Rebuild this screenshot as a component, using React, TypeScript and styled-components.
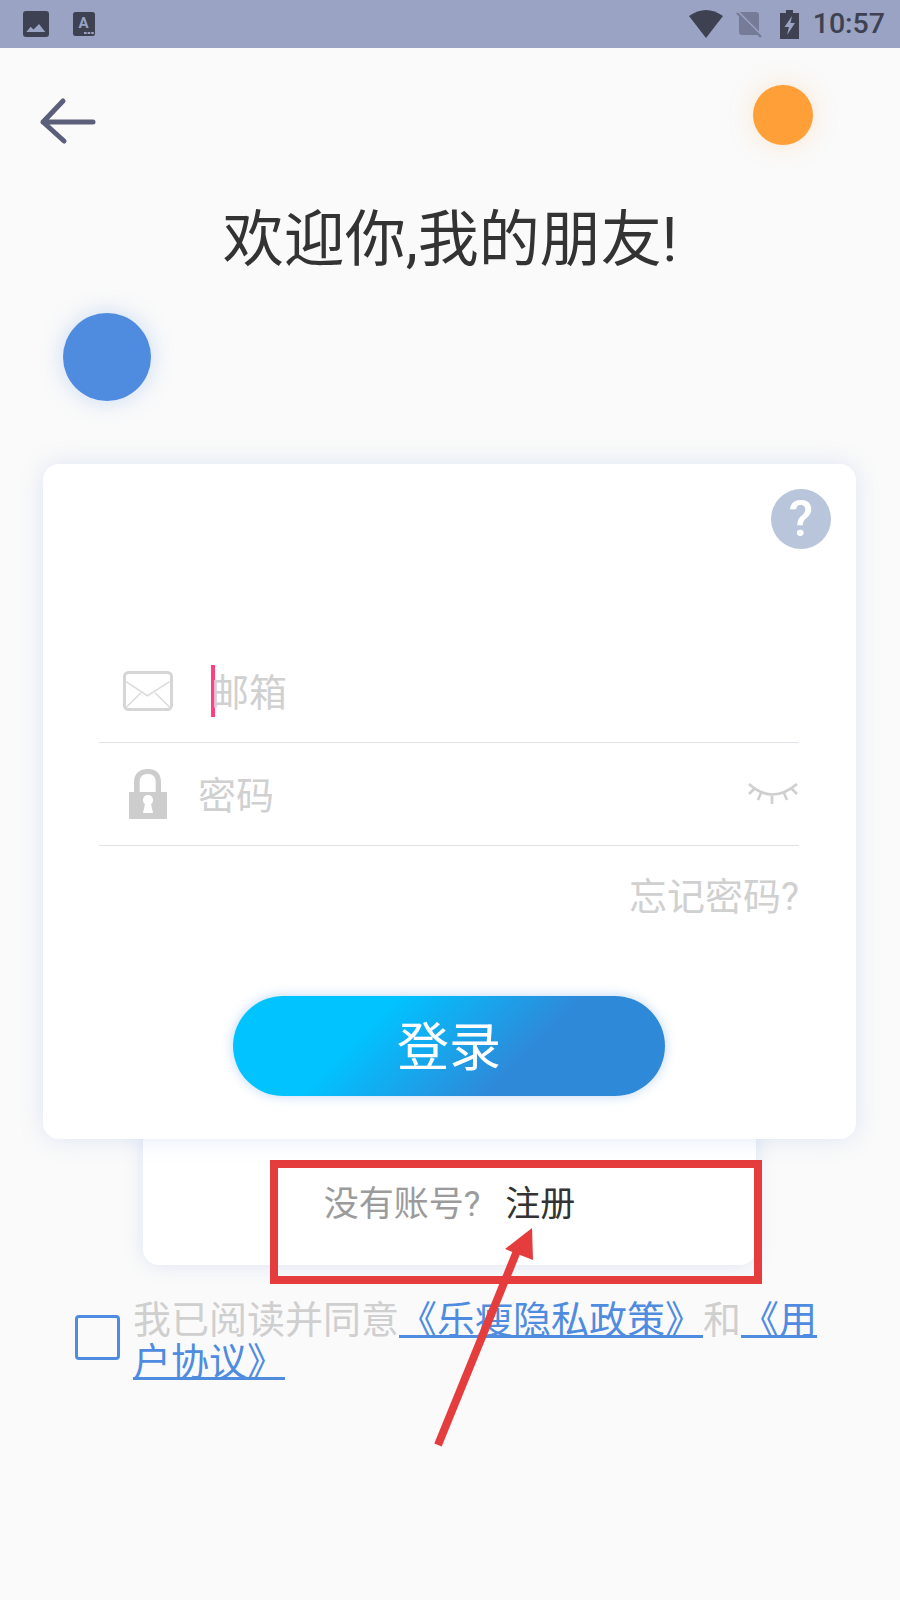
import React from 'react';
import styled, {createGlobalStyle} from "styled-components";

const GlobalStyle = createGlobalStyle`
    html, body {
        margin: 0;
        padding: 0;
        background: #fafafa;
    }
    body {
        font-family: Roboto, "Noto Sans CJK SC", sans-serif;
    }
`

export default function App() {
    return (
        <Page>
            <GlobalStyle/>
            <StatusBar>
                <StatusGroup>
                    <StatusIcon width="26" height="26" viewBox="0 0 26 26" $gap={23}>
                        <rect width="26" height="26" rx="3" fill="#3e4152"/>
                        <path d="M3.3 21 L7.7 15.7 L10.5 18.4 L16 13 L22.3 21 Z" fill="#9aa3c3"/>
                    </StatusIcon>
                    <StatusIcon width="22" height="24" viewBox="0 0 22 24" $gap={24}>
                        <rect width="22" height="24" rx="2.5" fill="#3e4152"/>
                        <text x="10.5" y="16" textAnchor="middle" fontFamily="Roboto" fontWeight="700" fontSize="15" fill="#9aa3c3">A</text>
                        <path d="M11 20h2.6v2H11zM14.6 20h2.6v2h-2.6zM18.2 20h2.6v2h-2.6z" fill="#9aa3c3"/>
                    </StatusIcon>
                </StatusGroup>
                <StatusGroup>
                    <StatusIcon width="34" height="28" viewBox="0 0 34 28">
                        <path d="M0 6 Q17 -6 34 6 L17 28 Z" fill="#3e4152"/>
                    </StatusIcon>
                    <StatusIcon width="26" height="27" viewBox="0 0 26 27" $gap={13}>
                        <path d="M5 1 H20 Q23 1 23 4 V24 H6 Q3 24 3 21 V3 Q3 1 5 1 Z" fill="#767b98"/>
                        <path d="M1 0 L25 24" stroke="#9aa3c3" strokeWidth="2.4"/>
                        <path d="M1 2 L25 26" stroke="#767b98" strokeWidth="2.4"/>
                    </StatusIcon>
                    <StatusIcon width="19" height="29" viewBox="0 0 19 29" $gap={18}>
                        <path d="M6 0 H13 V3 H19 V29 H0 V3 H6 Z" fill="#3e4152"/>
                        <path d="M12 6 L4.5 17 H9 L7 25 L15 13 H10.5 Z" fill="#9aa3c3"/>
                    </StatusIcon>
                    <Clock>10:57</Clock>
                </StatusGroup>
            </StatusBar>

            <TopRow>
                <BackIcon width="58" height="50" viewBox="0 0 58 50">
                    <path d="M25 5 L5 26 L26 45 M5 26 H55" fill="none" stroke="#5b5f7a" strokeWidth="5"
                          strokeLinecap="round" strokeLinejoin="round"/>
                </BackIcon>
                <OrangeDot/>
            </TopRow>

            <Title>欢迎你,我的朋友!</Title>
            <BlueDot/>

            <LoginCard>
                <HelpButton>?</HelpButton>
                <Field $gap={38}>
                    <FieldIcon>
                        <svg width="50" height="40" viewBox="0 0 50 40">
                            <rect x="1.5" y="1.5" width="47" height="37" rx="4" fill="none" stroke="#d6d6d6" strokeWidth="3"/>
                            <path d="M3 10.7 L24.5 24.7 L46.5 10.7 M2.5 37 L18 21.7 M47.5 37 L32 21.7" fill="none"
                                  stroke="#dcdcdc" strokeWidth="1.6"/>
                        </svg>
                    </FieldIcon>
                    <Caret/>
                    <Placeholder>邮箱</Placeholder>
                </Field>
                <Field $gap={25}>
                    <FieldIcon>
                        <svg width="38" height="50" viewBox="0 0 38 50">
                            <path d="M0 23 H5 V13 C5 4 11 0 19 0 C27 0 32 4 32 13 V23 H38 V50 H0 Z M10.7 23 H26.7 V13 C26.7 7 23 5 19 5 C14 5 10.7 7 10.7 13 Z"
                                  fill="#cdcdcd" fillRule="evenodd"/>
                            <path d="M19 26 a5 5 0 0 1 3 9 L24 44 H14 L16 35 a5 5 0 0 1 3 -9 Z" fill="#ffffff"/>
                        </svg>
                    </FieldIcon>
                    <Placeholder>密码</Placeholder>
                    <EyeIcon width="50" height="21" viewBox="0 0 50 21">
                        <path d="M1 1 Q24 22 49 1 M13 10 L10 17 M24 13 V21 M36 10 L39 17 M6 6 L1 11 M44 6 L49 11" fill="none"
                              stroke="#cfcfcf" strokeWidth="2.6"/>
                    </EyeIcon>
                </Field>
                <ForgotLink>忘记密码?</ForgotLink>
                <LoginButton>登录</LoginButton>
            </LoginCard>

            <RegisterCard>
                <RegisterHint>没有账号?</RegisterHint>
                <RegisterLink>注册</RegisterLink>
            </RegisterCard>

            <Agreement>
                <Checkbox/>
                <AgreementText>
                    我已阅读并同意<PolicyLink>《乐瘦隐私政策》</PolicyLink>和<PolicyLink>《用</PolicyLink><PolicyLink>户协议》</PolicyLink>
                </AgreementText>
            </Agreement>

            <Highlight/>
            <PointerArrow width="110" height="222" viewBox="0 0 110 222">
                <path d="M6 220 L85 26" stroke="#e53d3d" strokeWidth="8" fill="none"/>
                <path d="M100 3 L73 24 L101 35 Z" fill="#e53d3d"/>
            </PointerArrow>
        </Page>
    );
}

const Page = styled.div`
    position: relative;
    width: 900px;
    height: 1600px;
    overflow: hidden;
    background: #fafafa;
`
const StatusBar = styled.div`
    display: flex;
    justify-content: space-between;
    align-items: center;
    height: 48px;
    padding-right: 15px;
    background: #9aa3c3;
`
const StatusGroup = styled.div`
    display: flex;
    align-items: center;
`
const StatusIcon = styled.svg<{ $gap?: number }>`
    display: block;
    margin-left: ${props => props.$gap || 0}px;
`
const Clock = styled.span`
    margin-left: 14px;
    font-size: 28.5px;
    font-weight: 500;
    line-height: 48px;
    color: #3e4152;
`
const TopRow = styled.div`
    display: flex;
    justify-content: space-between;
    padding: 37px 87px 0 38px;
`
const BackIcon = styled.svg`
    display: block;
    margin-top: 11px;
`
const OrangeDot = styled.div`
    width: 60px;
    height: 60px;
    border-radius: 50%;
    background: #ff9f38;
    box-shadow: 0 0 26px rgba(255, 160, 56, 0.22);
`
const Title = styled.h1`
    margin: 54px 0 0;
    font-size: 61px;
    font-weight: 400;
    line-height: 80px;
    text-align: center;
    color: #333333;
`
const BlueDot = styled.div`
    width: 88px;
    height: 88px;
    margin: 33px 0 0 63px;
    border-radius: 50%;
    background: #4f8ce0;
    box-shadow: 0 0 24px rgba(79, 140, 224, 0.28);
`
const LoginCard = styled.div`
    position: relative;
    z-index: 1;
    display: flex;
    flex-direction: column;
    box-sizing: border-box;
    height: 675px;
    margin: 63px 44px 0 43px;
    padding: 25px 57px 0 56px;
    border-radius: 16px;
    background: #ffffff;
    box-shadow: 0 0 24px rgba(90, 135, 210, 0.18);
`
const HelpButton = styled.div`
    align-self: flex-end;
    width: 60px;
    height: 60px;
    margin: 0 -32px 91px 0;
    border-radius: 50%;
    background: #b9c5da;
    font-size: 50px;
    font-weight: 500;
    line-height: 60px;
    text-align: center;
    color: #ffffff;
`
const Field = styled.div<{ $gap: number }>`
    display: flex;
    align-items: center;
    box-sizing: border-box;
    height: 103px;
    padding-left: 24px;
    border-bottom: 1px solid #e2e2ec;
    gap: ${props => props.$gap}px;
`
const FieldIcon = styled.div`
    display: flex;
    justify-content: center;
    width: 50px;
    svg {
        display: block;
    }
`
const Caret = styled.div`
    width: 4px;
    height: 52px;
    margin-right: -42px;
    background: #ff4081;
`
const Placeholder = styled.span`
    flex: 1;
    padding-top: 4px;
    font-size: 38px;
    line-height: 50px;
    color: #d0d0d0;
`
const EyeIcon = styled.svg`
    display: block;
    margin: 0 1px 2px 0;
`
const ForgotLink = styled.div`
    margin-top: 26px;
    font-size: 38px;
    line-height: 50px;
    text-align: right;
    color: #d0d0d0;
`
const LoginButton = styled.button`
    align-self: center;
    width: 432px;
    height: 100px;
    margin-top: 74px;
    padding: 0 0 6px;
    border: none;
    border-radius: 50px;
    background: linear-gradient(135deg, #00c3ff 31%, #2f89d9 66%);
    box-shadow: 0 0 12px rgba(60, 130, 225, 0.32);
    font-family: Roboto, "Noto Sans CJK SC", sans-serif;
    font-size: 52px;
    color: #ffffff;
`
const RegisterCard = styled.div`
    display: flex;
    justify-content: center;
    box-sizing: border-box;
    width: 613px;
    height: 141px;
    margin: -15px 0 0 143px;
    padding-top: 56px;
    gap: 25px;
    border-radius: 0 0 16px 16px;
    background: #ffffff;
    box-shadow: 0 0 20px rgba(90, 135, 210, 0.18);
    font-size: 35px;
    line-height: 50px;
`
const RegisterHint = styled.span`
    color: #9b9b9b;
`
const RegisterLink = styled.span`
    color: #333333;
`
const Agreement = styled.div`
    display: flex;
    align-items: flex-start;
    gap: 13px;
    margin: 34px 60px 0 75px;
`
const Checkbox = styled.div`
    flex: none;
    box-sizing: border-box;
    width: 45px;
    height: 45px;
    margin-top: 16px;
    border: 3px solid #4f8ce0;
    border-radius: 4px;
`
const AgreementText = styled.div`
    font-size: 38px;
    line-height: 42px;
    color: #cfcfcf;
`
const PolicyLink = styled.span`
    color: #4f8ce0;
    text-decoration: underline;
`
const Highlight = styled.div`
    position: absolute;
    left: 270px;
    top: 1160px;
    box-sizing: border-box;
    width: 492px;
    height: 124px;
    border: 8px solid #e53d3d;
`
const PointerArrow = styled.svg`
    position: absolute;
    left: 432px;
    top: 1225px;
`
